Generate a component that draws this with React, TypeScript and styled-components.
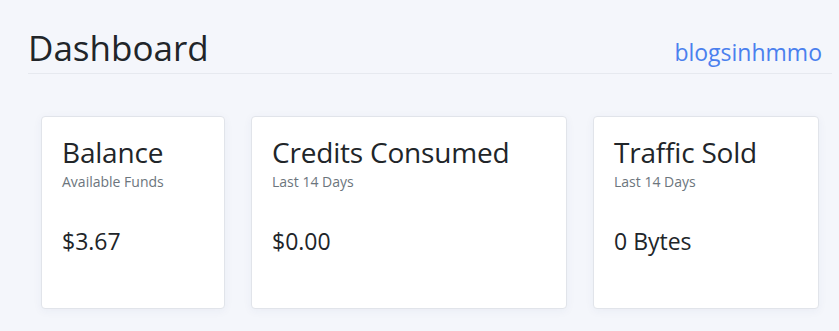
import * as React from 'react';
import styled, { createGlobalStyle } from 'styled-components';

const GlobalStyle = createGlobalStyle`
  html, body {
    margin: 0;
    padding: 0;
    background: #f4f6fb;
  }
  body {
    font-family: "Open Sans", "Noto Sans", sans-serif;
    color: #212529;
  }
`;

const Page = styled.div`
  width: 839px;
  height: 331px;
  overflow: hidden;
  padding: 0 7px 0 28px;
  box-sizing: border-box;
`;

const Header = styled.div`
  display: flex;
  justify-content: space-between;
  align-items: baseline;
  padding-top: 27px;
  padding-bottom: 4px;
  border-bottom: 1px solid #e6e9ef;
`;

const Title = styled.h1`
  margin: 0;
  font-size: 35px;
  font-weight: 400;
  line-height: 42px;
`;

const Brand = styled.a`
  margin-right: 10px;
  font-size: 23px;
  line-height: 28px;
  color: #4a80ee;
  text-decoration: none;
`;

const CardRow = styled.div`
  display: flex;
  gap: 26px;
  margin-top: 42px;
  padding-left: 13px;
`;

const Card = styled.div<{ $width: number }>`
  width: ${(props) => props.$width}px;
  height: 193px;
  box-sizing: border-box;
  background: #ffffff;
  border: 1px solid #e1e4ea;
  border-radius: 4px;
  box-shadow: 0 2px 10px rgba(40, 60, 110, 0.05);
  padding: 18px 20px;
`;

const CardTitle = styled.h3`
  margin: 0;
  font-size: 28px;
  font-weight: 400;
  line-height: 34px;
  letter-spacing: -0.2px;
  white-space: nowrap;
`;

const CardSubtitle = styled.div`
  margin-top: 4px;
  font-size: 14px;
  line-height: 18px;
  color: #6c757d;
`;

const CardValue = styled.div`
  margin-top: 36px;
  font-size: 23px;
  line-height: 28px;
`;

const stats = [
  { title: 'Balance', subtitle: 'Available Funds', value: '$3.67', width: 184 },
  { title: 'Credits Consumed', subtitle: 'Last 14 Days', value: '$0.00', width: 316 },
  { title: 'Traffic Sold', subtitle: 'Last 14 Days', value: '0 Bytes', width: 226 },
];

export default function App() {
  return (
    <>
      <GlobalStyle />
      <Page>
        <Header>
          <Title>Dashboard</Title>
          <Brand href="#">blogsinhmmo</Brand>
        </Header>
        <CardRow>
          {stats.map((s) => (
            <Card key={s.title} $width={s.width}>
              <CardTitle>{s.title}</CardTitle>
              <CardSubtitle>{s.subtitle}</CardSubtitle>
              <CardValue>{s.value}</CardValue>
            </Card>
          ))}
        </CardRow>
      </Page>
    </>
  );
}
